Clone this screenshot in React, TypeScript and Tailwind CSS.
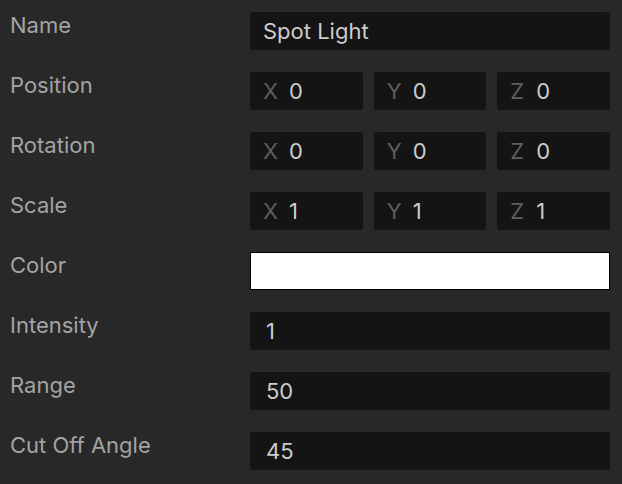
import React from 'react';

type Vec = { x: string; y: string; z: string };

const Label: React.FC<{ text: string }> = ({ text }) => (
  <div className="w-[250px] shrink-0 pl-[10px] pt-[2px] text-[22px] leading-[22px] text-[#a3a3a3]">{text}</div>
);

const VectorField: React.FC<{ v: Vec }> = ({ v }) => (
  <div className="grid flex-1 grid-cols-3 gap-[11px]">
    {(['x', 'y', 'z'] as const).map((k) => (
      <div key={k} className="flex h-[38px] items-center rounded-[3px] bg-[#141414] pl-[13px] text-[22px]">
        <span className="w-[26px] text-[#5e5e5e]">{k.toUpperCase()}</span>
        <span className="text-[#cccccc]">{v[k]}</span>
      </div>
    ))}
  </div>
);

const TextField: React.FC<{ value: string; numeric?: boolean }> = ({ value, numeric }) => (
  <div
    className={`flex h-[38px] flex-1 items-center rounded-[3px] bg-[#141414] text-[22px] text-[#cccccc] ${
      numeric ? 'pl-[16px]' : 'pl-[13px]'
    }`}
  >
    {value}
  </div>
);

export default function App() {
  return (
    <div
      className="min-h-[484px] w-[622px] bg-[#282828] pr-[12px] pt-[12px]"
      style={{ fontFamily: 'Inter, "Noto Sans", sans-serif' }}
    >
      <div className="flex flex-col gap-[22px]">
        <div className="flex items-start">
          <Label text="Name" />
          <TextField value="Spot Light" />
        </div>
        <div className="flex items-start">
          <Label text="Position" />
          <VectorField v={{ x: '0', y: '0', z: '0' }} />
        </div>
        <div className="flex items-start">
          <Label text="Rotation" />
          <VectorField v={{ x: '0', y: '0', z: '0' }} />
        </div>
        <div className="flex items-start">
          <Label text="Scale" />
          <VectorField v={{ x: '1', y: '1', z: '1' }} />
        </div>
        <div className="flex items-start">
          <Label text="Color" />
          <div className="h-[38px] flex-1 border-[1.5px] border-black bg-white" />
        </div>
        <div className="flex items-start">
          <Label text="Intensity" />
          <TextField value="1" numeric />
        </div>
        <div className="flex items-start">
          <Label text="Range" />
          <TextField value="50" numeric />
        </div>
        <div className="flex items-start">
          <Label text="Cut Off Angle" />
          <TextField value="45" numeric />
        </div>
      </div>
    </div>
  );
}
